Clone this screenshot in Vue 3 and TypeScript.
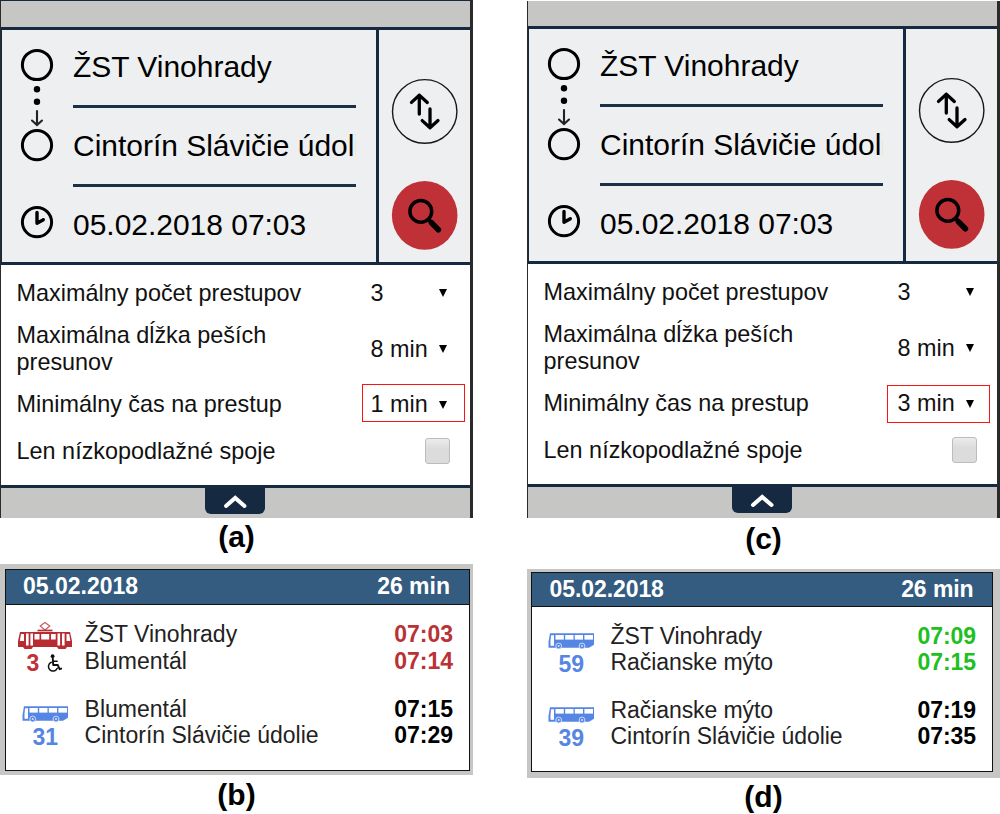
<script setup lang="ts">
interface Leg {
  kind: 'tram' | 'bus'
  line: string
  accessible?: boolean
  from: string
  to: string
  departs: string
  arrives: string
  tone: 'late' | 'ontime' | 'plain'
}

interface Panel {
  id: string
  searchLabel: string
  resultLabel: string
  transfer: string
  legs: Leg[]
}

const panels: Panel[] = [
  {
    id: 'first',
    searchLabel: '(a)',
    resultLabel: '(b)',
    transfer: '1 min',
    legs: [
      { kind: 'tram', line: '3', accessible: true, from: 'ŽST Vinohrady', to: 'Blumentál', departs: '07:03', arrives: '07:14', tone: 'late' },
      { kind: 'bus', line: '31', from: 'Blumentál', to: 'Cintorín Slávičie údolie', departs: '07:15', arrives: '07:29', tone: 'plain' },
    ],
  },
  {
    id: 'second',
    searchLabel: '(c)',
    resultLabel: '(d)',
    transfer: '3 min',
    legs: [
      { kind: 'bus', line: '59', from: 'ŽST Vinohrady', to: 'Račianske mýto', departs: '07:09', arrives: '07:15', tone: 'ontime' },
      { kind: 'bus', line: '39', from: 'Račianske mýto', to: 'Cintorín Slávičie údolie', departs: '07:19', arrives: '07:35', tone: 'plain' },
    ],
  },
]
</script>

<template>
  <main class="page">
    <section v-for="panel in panels" :key="panel.id" class="column" :class="panel.id">
      <div class="phone">
        <div class="topbar"></div>
        <div class="form">
          <svg class="rail" width="71" height="232" viewBox="2 30 71 232" fill="none" stroke="#000">
            <circle cx="37" cy="65" r="14.6" stroke-width="3" />
            <circle cx="37" cy="145.2" r="14.6" stroke-width="3" />
            <circle cx="37" cy="89.2" r="3.2" fill="#000" stroke="none" />
            <circle cx="37" cy="101.8" r="3.2" fill="#000" stroke="none" />
            <path d="M37 111V124.5M32 120.5l5 4.5 5-4.5" stroke="#222" stroke-width="2.1" stroke-linecap="round" />
            <circle cx="37" cy="222.2" r="14.6" stroke-width="3" />
            <path d="M37 212.5V223.3L43.3 219.7" stroke-width="3.4" stroke-linecap="round" stroke-linejoin="round" />
          </svg>
          <div class="fields">
            <div class="field">ŽST Vinohrady</div>
            <div class="field">Cintorín Slávičie údolie</div>
            <div class="field last">05.02.2018 07:03</div>
          </div>
          <svg class="actions" width="91" height="232" viewBox="379 30 91 232" fill="none" stroke="#000" stroke-linecap="round" stroke-linejoin="round">
            <ellipse cx="424.7" cy="111.4" rx="32.2" ry="31.8" stroke="#181818" stroke-width="1.4" />
            <path d="M419.3 114V95.2M411.5 102.4l7.8-7.2 8 7.2M430 109V127.8M422.2 120.6l7.8 7.2 8-7.2" stroke-width="3.3" />
            <ellipse cx="424.7" cy="215.4" rx="32.8" ry="34.4" fill="#bf3136" stroke="none" />
            <circle cx="420.8" cy="211.4" r="10.9" stroke-width="3.5" />
            <path d="M429.2 220.2l2.5 2.3" stroke-width="4" />
            <path d="M431.5 222.7l6.9 7" stroke-width="5.6" />
          </svg>
        </div>
        <div class="options">
          <div class="option">
            <span class="name">Maximálny počet prestupov</span>
            <span class="value">3</span>
            <i class="caret"></i>
          </div>
          <div class="option">
            <span class="name">Maximálna dĺžka peších presunov</span>
            <span class="value">8 min</span>
            <i class="caret"></i>
          </div>
          <div class="option">
            <span class="name">Minimálny čas na prestup</span>
            <span class="value">{{ panel.transfer }}</span>
            <i class="caret"></i>
          </div>
          <div class="option short">
            <span class="name">Len nízkopodlažné spoje</span>
            <span class="checkbox"></span>
          </div>
        </div>
        <div class="footer">
          <div class="tab">
            <svg width="60" height="26" viewBox="205 488 60 26">
              <path d="M226 506l9.2-8 9.3 8" fill="none" stroke="#fff" stroke-width="4" stroke-linecap="round" />
            </svg>
          </div>
        </div>
        <div class="highlight"></div>
      </div>
      <div class="caption upper">{{ panel.searchLabel }}</div>

      <div class="result">
        <div class="card">
          <header class="head"><span>05.02.2018</span><span>26 min</span></header>
          <div class="legs">
            <div v-for="leg in panel.legs" :key="leg.line" class="leg">
              <div class="vehicle" :class="leg.kind">
                <svg v-if="leg.kind === 'tram'" width="56" height="28" viewBox="0 0 56 28">
                  <path d="M28 1.5l4.8 3.5-4.8 4-4.8-4z" fill="none" stroke="#c4575a" stroke-width="1.1" />
                  <path d="M20.5 9.5h15" stroke="#b82b30" stroke-width="1.7" />
                  <path d="M3 11h50l2 9v6H1v-6z" fill="#b82b30" />
                  <path d="M6 26h10l-1.5 2h-7zM40 26h10l-1.5 2h-7z" fill="#b82b30" />
                  <g fill="#fff">
                    <path d="M4 13h3v7H2.8z" />
                    <rect x="9" y="12.5" width="2.6" height="12" />
                    <rect x="13.4" y="12.5" width="2.6" height="12" />
                    <rect x="17.5" y="13" width="5" height="5.5" />
                    <rect x="24.2" y="13" width="8" height="5.5" />
                    <rect x="34" y="13" width="4.7" height="5.5" />
                    <rect x="40.5" y="12.5" width="2.6" height="12" />
                    <rect x="45" y="12.5" width="2.6" height="12" />
                    <path d="M49.5 13h2.7l1.2 7h-3.9z" />
                  </g>
                </svg>
                <svg v-else width="46" height="28" viewBox="0 0 46 28">
                  <path d="M2 10.2h44v11.5l-5 3H.5v-6z" fill="#5686e3" />
                  <g fill="#fff">
                    <path d="M3.1 12.3H6v10.5H2.5v-5z" />
                    <rect x="7.5" y="12" width="8.3" height="4.6" />
                    <rect x="17.2" y="12" width="8.3" height="4.6" />
                    <rect x="26.8" y="12" width="8.2" height="4.6" />
                    <rect x="36.4" y="12" width="8.6" height="4.6" />
                  </g>
                  <g fill="#5686e3" stroke="#d6e2fa" stroke-width=".9">
                    <circle cx="10.7" cy="23" r="2.9" />
                    <circle cx="34" cy="23" r="2.9" />
                  </g>
                  <circle cx="10.7" cy="23" r="1" fill="#d6e2fa" />
                  <circle cx="34" cy="23" r="1" fill="#d6e2fa" />
                </svg>
                <div class="line">
                  <span>{{ leg.line }}</span>
                  <svg v-if="leg.accessible" width="15" height="18" viewBox="0 0 15 18" fill="none" stroke="#111" stroke-linecap="round" stroke-linejoin="round">
                    <circle cx="5.6" cy="2.2" r="1.9" fill="#111" stroke="none" />
                    <path d="M5.8 4.5l.4 6.5h4.6l1.8 4.2 1.6-.6" stroke-width="1.9" />
                    <path d="M6 7.3h4.2" stroke-width="1.4" />
                    <path d="M4.3 8.2a4.6 4.6 0 1 0 6 6.1" stroke-width="1.5" />
                  </svg>
                </div>
              </div>
              <div class="stops"><div>{{ leg.from }}</div><div>{{ leg.to }}</div></div>
              <div class="times" :class="leg.tone"><div>{{ leg.departs }}</div><div>{{ leg.arrives }}</div></div>
            </div>
          </div>
        </div>
      </div>
      <div class="caption lower">{{ panel.resultLabel }}</div>
    </section>
  </main>
</template>

<style>
body {
  margin: 0;
  background: #fff;
}
</style>

<style scoped>
.page {
  display: flex;
  justify-content: space-between;
  width: 1000px;
  height: 814px;
  overflow: hidden;
  background: #fff;
  font-family: "Liberation Sans", Arial, sans-serif;
  color: #000;
}
.column {
  display: flex;
  flex-direction: column;
  width: 473px;
}
.column > * {
  flex: none;
}
.phone {
  position: relative;
  display: flex;
  flex-direction: column;
  box-sizing: border-box;
  height: 518px;
  border-left: 1px solid #2b2b2b;
  border-right: 3px solid #2a2a2a;
  background: #c6c6c4;
}
.first .phone {
  border-top: 1px solid #152a40;
}
.second .phone {
  height: 517px;
  margin-top: 1px;
}
.topbar {
  height: 26px;
  flex: none;
}
.second .topbar {
  height: 25px;
}
.form {
  display: flex;
  flex: none;
  height: 232px;
  border-top: 3px solid #152a40;
  border-bottom: 3px solid #152a40;
  border-left: 1px solid #152a40;
  background: #eeeff1;
}
.rail,
.actions {
  display: block;
  flex: none;
}
.fields {
  width: 283px;
  margin-top: -1px;
  margin-right: 20px;
}
.field {
  height: 76px;
  border-bottom: 3px solid #1a3047;
  font-size: 29.96px;
  line-height: 75px;
  white-space: nowrap;
  overflow: hidden;
}
.field.last {
  height: 75px;
  border-bottom: 0;
}
.actions {
  border-left: 3px solid #152a40;
}
.options {
  flex: none;
  height: 220px;
  background: #fff;
  border-bottom: 3px solid #152a40;
  font-size: 23.4px;
  line-height: 27px;
  color: #111;
}
.option {
  display: flex;
  align-items: center;
  height: 56px;
  padding-left: 15.6px;
}
.option:nth-child(3) {
  height: 55px;
}
.option.short {
  height: 38px;
}
.name {
  width: 300px;
  margin-right: 54px;
}
.value {
  width: 68.4px;
}
.caret {
  border: 4px solid transparent;
  border-top: 8px solid #000;
  border-bottom: 0;
}
.checkbox {
  box-sizing: border-box;
  width: 25px;
  height: 26px;
  margin-left: 54.4px;
  border: 1.5px solid #bcbcbc;
  border-radius: 3px;
  background: linear-gradient(#ececec, #dcdcdc 40%);
}
.footer {
  flex: 1;
  display: flex;
}
.tab {
  width: 60px;
  height: 26px;
  margin-left: 204px;
  border-radius: 0 0 6px 6px;
  background: #152a40;
}
.tab svg {
  display: block;
}
.highlight {
  position: absolute;
  box-sizing: border-box;
  left: 361px;
  top: 383px;
  width: 103px;
  height: 38px;
  border: 1px solid #fa1414;
}
.second .highlight {
  left: 359px;
  top: 384px;
}
.caption {
  font-size: 30px;
  font-weight: bold;
  text-align: center;
}
.caption.upper {
  height: 46px;
  line-height: 37px;
}
.second .caption.upper {
  height: 51px;
  line-height: 42px;
}
.caption.lower {
  line-height: 39px;
}
.second .caption.lower {
  line-height: 38px;
}
.result {
  box-sizing: border-box;
  height: 211px;
  padding: 5px 3px 4px 5px;
  background: #c6c6c4;
}
.second .result {
  height: 209px;
  padding: 3px 7px 6px 4px;
}
.card {
  box-sizing: border-box;
  height: 100%;
  border: 1px solid #111;
  background: #fff;
  font-size: 23px;
}
.second .card {
  letter-spacing: -0.09px;
}
.head {
  display: flex;
  justify-content: space-between;
  height: 34px;
  padding: 0 19px 0 17px;
  border-bottom: 1px solid #111;
  background: #335c80;
  color: #fff;
  font-weight: bold;
  line-height: 33px;
}
.second .head {
  height: 33px;
  padding: 0 18.5px 0 17.6px;
}
.legs {
  display: flex;
  flex-direction: column;
  gap: 21.6px;
  padding-top: 16px;
}
.second .legs {
  gap: 21.2px;
}
.leg {
  display: flex;
  height: 53px;
  padding-right: 16px;
  line-height: 26.5px;
}
.second .leg {
  line-height: 26px;
}
.vehicle {
  display: flex;
  flex-direction: column;
  align-items: center;
  width: 78.6px;
}
.vehicle > svg {
  display: block;
  flex: none;
}
.line {
  display: flex;
  align-items: center;
  gap: 8px;
  line-height: 28px;
  font-weight: bold;
}
.tram .line {
  color: #c03236;
  margin-left: -2px;
}
.bus .line {
  color: #5686e3;
  margin-top: -1px;
}
.stops {
  flex: 1;
  color: #222;
}
.times {
  font-weight: bold;
}
.late {
  color: #b93236;
}
.ontime {
  color: #20c020;
}
</style>
